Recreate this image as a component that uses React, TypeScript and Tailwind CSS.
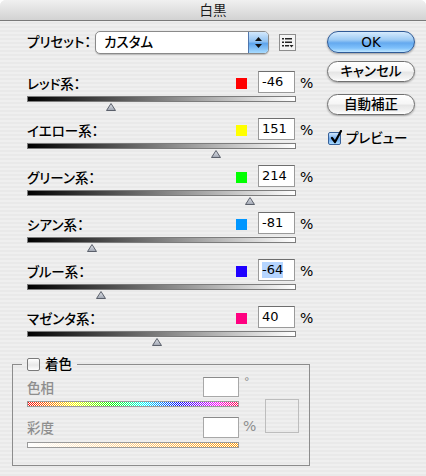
import React from "react";

const FONT = "font-['DejaVu_Sans','Noto_Sans_CJK_JP',sans-serif] [font-feature-settings:'palt'] font-medium";

function Thumb() {
  return (
    <svg width="10" height="8" viewBox="0 0 10 8">
      <defs>
        <linearGradient id="tg" x1="0" y1="0" x2="0" y2="1">
          <stop offset="0" stopColor="#e4e7ee" />
          <stop offset="1" stopColor="#9ea4b0" />
        </linearGradient>
      </defs>
      <polygon points="5,0.5 9.5,7.5 0.5,7.5" fill="url(#tg)" stroke="#5b606b" strokeWidth="1" />
    </svg>
  );
}

type RowProps = { label: string; swatch: string; value: number; selected?: boolean };

function SliderRow({ label, swatch, value, selected }: RowProps) {
  const pos = ((value + 200) / 500) * 268 - 5;
  return (
    <div className="h-[47px] flex flex-col">
      <div className="flex items-center h-[22px]">
        <span className="flex-1 text-[13.5px] text-black pt-[4px]">{label}</span>
        <span className={`w-[11px] h-[11px] mr-[11px] mt-[3px] ${swatch}`} />
        <div className="w-[37px] h-[22px] bg-white border border-[#9a9a9a] border-t-[#6e6e6e] flex items-center pl-[3px] text-[13px] text-black">
          <span className={selected ? "bg-[#b5d5ff] leading-[16px]" : "leading-[16px]"}>{value}</span>
        </div>
        <span className="ml-[5px] w-[10px] whitespace-nowrap text-[14px] leading-[16px] pt-[2px] text-black">%</span>
      </div>
      <div className="relative mt-[3px] w-[269px] h-[6px] border border-[#7c7c7c] bg-[linear-gradient(to_right,#000000,#ffffff)]">
        <div className="absolute top-[6px]" style={{ left: pos }}>
          <Thumb />
        </div>
      </div>
    </div>
  );
}

function AquaButton({ children, primary }: { children: React.ReactNode; primary?: boolean }) {
  return (
    <div
      className={
        primary
          ? "w-[88px] h-[22px] rounded-full border border-[#2f5a96] bg-[linear-gradient(to_bottom,#d6ebfd_0%,#9ccaf4_40%,#64a9ef_55%,#7fc1fb_80%,#bfe6ff_100%)] shadow-[0_1px_2px_rgba(0,0,0,0.35)] flex items-center justify-center text-[13.5px] text-black"
          : "w-[88px] h-[21px] rounded-full border border-[#707070] bg-[linear-gradient(to_bottom,#ffffff_0%,#f6f6f6_45%,#e6e6e6_55%,#f3f3f3_85%,#ffffff_100%)] shadow-[0_1px_2px_rgba(0,0,0,0.3)] flex items-center justify-center text-[13.5px] text-black"
      }
    >
      {children}
    </div>
  );
}

function MenuIcon() {
  return (
    <svg width="17" height="17" viewBox="0 0 17 17">
      <rect x="0.5" y="0.5" width="16" height="16" fill="#f4f4f4" stroke="#8d8d8d" />
      <rect x="3" y="4" width="2" height="1.5" fill="#222" />
      <rect x="6" y="4" width="7" height="1.5" fill="#222" />
      <rect x="3" y="7.5" width="2" height="1.5" fill="#222" />
      <rect x="6" y="7.5" width="7" height="1.5" fill="#222" />
      <rect x="3" y="11" width="2" height="1.5" fill="#222" />
      <rect x="6" y="11" width="4" height="1.5" fill="#222" />
      <polygon points="10.5,11 14.5,11 12.5,13.5" fill="#222" />
    </svg>
  );
}

export default function App() {
  return (
    <div className={`w-[426px] h-[476px] bg-white ${FONT}`}>
      <div className="w-[426px] h-[476px] rounded-t-[6px] overflow-hidden flex flex-col bg-[repeating-linear-gradient(to_bottom,#efefef_0px,#efefef_2px,#e9e9e9_2px,#e9e9e9_4px)]">
        {/* title bar */}
        <div className="h-[21px] shrink-0 border-b border-[#7a7a7a] bg-[linear-gradient(to_bottom,#f0f0f0,#d2d2d2)] flex items-center justify-center text-[13.5px] font-normal text-[#1a1a1a]">
          白黒
        </div>

        <div className="flex pt-[10px]">
          {/* left column */}
          <div className="w-[310px] pl-[27px] flex flex-col">
            <div className="flex items-center h-[23px] mb-[17px]">
              <span className="w-[68px] text-[13.5px] text-black">プリセット：</span>
              <div className="w-[174px] h-[23px] rounded-[5px] border border-[#8a8a8a] bg-white shadow-[0_1px_1px_rgba(0,0,0,0.2)] flex overflow-hidden">
                <span className="flex-1 pl-[8px] text-[13.5px] text-black leading-[21px]">カスタム</span>
                <div className="w-[20px] h-full border-l border-[#4f76ad] bg-[linear-gradient(to_bottom,#d3e8fc_0%,#92c3f2_45%,#5ea4ec_55%,#a7dbff_100%)] flex flex-col items-center justify-center gap-[3px]">
                  <svg width="7" height="4" viewBox="0 0 7 4"><polygon points="3.5,0 7,4 0,4" fill="#111" /></svg>
                  <svg width="7" height="4" viewBox="0 0 7 4"><polygon points="0,0 7,0 3.5,4" fill="#111" /></svg>
                </div>
              </div>
              <div className="ml-[10px]">
                <MenuIcon />
              </div>
            </div>

            <SliderRow label="レッド系：" swatch="bg-[#ff0000]" value={-46} />
            <SliderRow label="イエロー系：" swatch="bg-[#ffff00]" value={151} />
            <SliderRow label="グリーン系：" swatch="bg-[#00ff00]" value={214} />
            <SliderRow label="シアン系：" swatch="bg-[#0096ff]" value={-81} />
            <SliderRow label="ブルー系：" swatch="bg-[#1e00ff]" value={-64} selected />
            <SliderRow label="マゼンタ系：" swatch="bg-[#ff0080]" value={40} />
          </div>

          {/* right column */}
          <div className="ml-[17px] flex flex-col">
            <AquaButton primary>OK</AquaButton>
            <div className="mt-[8px]">
              <AquaButton>キャンセル</AquaButton>
            </div>
            <div className="mt-[12px]">
              <AquaButton>自動補正</AquaButton>
            </div>
            <div className="mt-[13px] flex items-center ml-[1px]">
              <div className="w-[13px] h-[13px] rounded-[2px] border border-[#37619a] bg-[linear-gradient(to_bottom,#cfe6fc,#6daaf0_55%,#a9dbff)] relative">
                <svg className="absolute -top-[3px] left-[1px]" width="13" height="14" viewBox="0 0 13 14">
                  <path d="M2 8 L5 12 L11 1" fill="none" stroke="#000" strokeWidth="2.2" strokeLinecap="round" strokeLinejoin="round" />
                </svg>
              </div>
              <span className="ml-[5px] text-[13.5px] text-black">プレビュー</span>
            </div>
          </div>
        </div>

        {/* colorize group */}
        <fieldset className="ml-[12px] mt-[4px] w-[298px] border border-[#8c8c8c] px-0 pb-[17px]">
          <legend className="ml-[9px] px-[5px] flex items-center h-[14px]">
            <span className="w-[13px] h-[13px] rounded-[2px] border border-[#7a7a7a] bg-[linear-gradient(to_bottom,#ffffff,#e8e8e8_55%,#ffffff)]" />
            <span className="ml-[5px] text-[13.5px] text-black leading-[14px]">着色</span>
          </legend>
          <div className="flex pt-[6px] pl-[14px]">
            <div className="w-[212px] flex flex-col">
              <div className="flex items-center justify-between h-[20px]">
                <span className="text-[13.5px] text-[#8e8e8e] pt-[2px]">色相</span>
                <div className="w-[36px] h-[20px] bg-white border border-[#a8a8a8] border-t-[#8a8a8a]" />
              </div>
              <div className="mt-[4px] h-[6px] border border-[#9a9a9a] bg-[image:repeating-conic-gradient(#ffffff_0%_25%,transparent_0%_50%),linear-gradient(to_right,#ff0000,#ffff00_22%,#00ff00_40%,#00ffff_55%,#0000ff_72%,#ff00ff_90%,#ff0040)] bg-[length:2px_2px,100%_100%]" />
              <div className="flex items-center justify-between h-[21px] mt-[10px]">
                <span className="text-[13.5px] text-[#8e8e8e] pt-[2px]">彩度</span>
                <div className="w-[36px] h-[21px] bg-white border border-[#a8a8a8] border-t-[#8a8a8a]" />
              </div>
              <div className="mt-[4px] h-[6px] border border-[#9a9a9a] bg-[image:repeating-conic-gradient(#ffffff_0%_25%,transparent_0%_50%),linear-gradient(to_right,#ffffff,#ff9900)] bg-[length:2px_2px,100%_100%]" />
            </div>
            <div className="w-[26px] flex flex-col">
              <span className="ml-[5px] text-[11px] text-[#8e8e8e] leading-[12px] mt-[-1px]">°</span>
              <span className="ml-[4px] mt-[30px] text-[14px] leading-[16px] text-[#8e8e8e]">%</span>
            </div>
            <div className="mt-[22px] w-[34px] h-[34px] border border-[#bdbdbd]" />
          </div>
        </fieldset>
      </div>
    </div>
  );
}
